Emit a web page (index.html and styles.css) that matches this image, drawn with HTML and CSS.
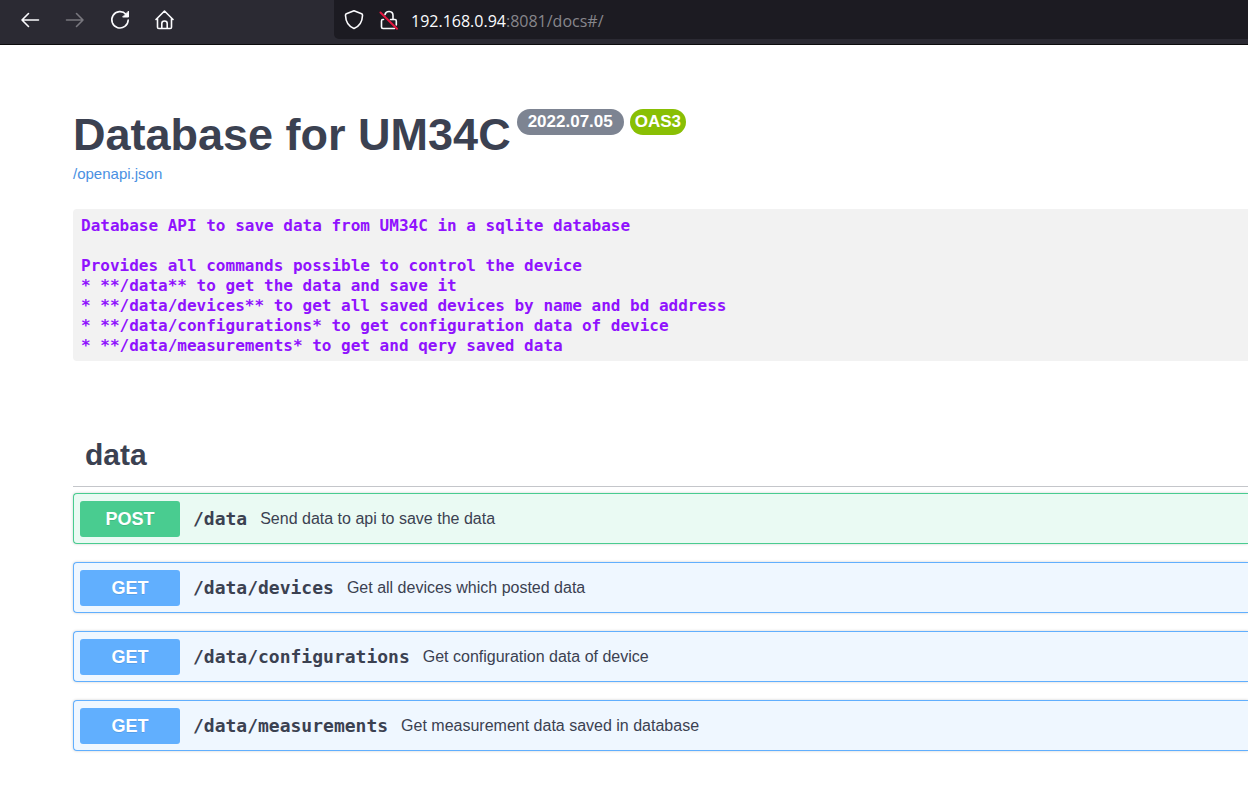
FILE: index.html
```html
<!DOCTYPE html>
<html lang="en">
<head>
<meta charset="utf-8">
<meta name="viewport" content="width=device-width, initial-scale=1">
<title>Database for UM34C</title>
<link rel="stylesheet" href="styles.css">
</head>
<body>
<header class="toolbar">
  <nav class="nav-buttons" aria-label="Browser navigation">
    <button class="icon-button" type="button" aria-label="Back">
      <svg width="20" height="20" viewBox="0 0 20 20"><path d="M18.5 10H2M8.500 3.500 2 10 8.500 16.500"/></svg>
    </button>
    <button class="icon-button disabled" type="button" aria-label="Forward" disabled>
      <svg width="20" height="20" viewBox="0 0 20 20"><path d="M1.5 10H18M11.500 3.500 18 10 11.500 16.500"/></svg>
    </button>
    <button class="icon-button" type="button" aria-label="Reload">
      <svg width="20" height="20" viewBox="0 0 20 20"><path d="M16 4.200A8.200 8.200 0 1 0 18.200 10"/><path class="solid" d="M18.500 1.500V7H13Z"/></svg>
    </button>
    <button class="icon-button" type="button" aria-label="Home">
      <svg width="20" height="20" viewBox="0 0 20 20"><path d="M1 9.500 9.500 1 18 9.500M2.500 8.500V17.200Q2.500 18.500 3.800 18.500H15.200Q16.500 18.500 16.500 17.200V8.500M6.800 18V13.500Q6.800 11 9.500 11T12.200 13.500V18"/></svg>
    </button>
  </nav>
  <div class="address-bar">
    <button class="icon-button" type="button" aria-label="Tracking protection">
      <svg width="20" height="20" viewBox="0 0 20 20"><path d="M10 .8 17.600 3.800Q18.600 4.200 18.500 5.500C18.300 11.500 15 16.500 10 18.500C5 16.500 1.700 11.500 1.500 5.500Q1.400 4.200 2.400 3.800Z"/></svg>
    </button>
    <button class="icon-button" type="button" aria-label="Connection is not secure">
      <svg width="20" height="20" viewBox="0 0 20 20"><path d="M6 4.500C7 .3 14 .3 14 5.500V9M4.500 9.500H3.800Q2.500 9.500 2.500 11V17Q2.500 18.500 4 18.500H15.500M11.500 9.500H16Q17.300 9.500 17.300 11V15"/><path class="strike" d="M1.500 2.500 18 18.800"/></svg>
    </button>
    <div class="url" role="textbox" aria-label="Address" tabindex="0"><span class="host">192.168.0.94</span>:8081/docs#/</div>
  </div>
</header>
<main class="docs">
  <section class="info">
    <div class="title-row">
      <h1 class="title">Database for UM34C</h1>
      <span class="badge version">2022.07.05</span>
      <span class="badge oas">OAS3</span>
    </div>
    <a class="spec-link" href="/openapi.json">/openapi.json</a>
    <pre class="description">Database API to save data from UM34C in a sqlite database

Provides all commands possible to control the device
* **/data** to get the data and save it
* **/data/devices** to get all saved devices by name and bd address
* **/data/configurations* to get configuration data of device
* **/data/measurements* to get and qery saved data</pre>
  </section>
  <section class="tag">
    <h2 class="tag-name">data</h2>
    <div class="operations">
      <button class="operation post" type="button"><span class="method">POST</span><span class="path">/data</span><span class="summary">Send data to api to save the data</span></button>
      <button class="operation get" type="button"><span class="method">GET</span><span class="path">/data/devices</span><span class="summary">Get all devices which posted data</span></button>
      <button class="operation get" type="button"><span class="method">GET</span><span class="path">/data/configurations</span><span class="summary">Get configuration data of device</span></button>
      <button class="operation get" type="button"><span class="method">GET</span><span class="path">/data/measurements</span><span class="summary">Get measurement data saved in database</span></button>
    </div>
  </section>
</main>
</body>
</html>
```

FILE: styles.css
```css
* {
  box-sizing: border-box;
}

body {
  margin: 0;
  background: #fff;
  color: #3b4151;
  font-family: "Liberation Sans", Arial, sans-serif;
}

.toolbar {
  display: flex;
  align-items: flex-start;
  height: 45px;
  background: #2b2a33;
  border-bottom: 1px solid #0c0c0d;
}

.nav-buttons {
  display: flex;
  flex: 0 0 334px;
  gap: 25px;
  padding: 10px 20px;
}

.icon-button {
  display: block;
  padding: 0;
  border: 0;
  background: none;
  color: #fbfbfe;
}

.icon-button.disabled {
  color: #78777e;
}

.icon-button svg {
  display: block;
  fill: none;
  stroke: currentColor;
  stroke-width: 1.6;
  stroke-linecap: round;
  stroke-linejoin: round;
}

.icon-button .solid {
  fill: currentColor;
  stroke-width: 1;
}

.icon-button .strike {
  stroke: #e4163f;
  stroke-width: 2;
}

.address-bar {
  display: flex;
  flex: 1;
  align-items: center;
  gap: 15px;
  height: 39px;
  padding-left: 10px;
  background: #1c1b22;
  border-bottom-left-radius: 5px;
}

.url {
  margin-left: -3px;
  padding-top: 3px;
  color: #87868c;
  font: 16px/24px "Open Sans", "Noto Sans", sans-serif;
  white-space: nowrap;
}

.host {
  color: #fbfbfe;
}

.docs {
  padding: 64px 0 36px 73px;
}

.title-row {
  display: flex;
  align-items: flex-start;
  gap: 6px;
}

.title {
  margin: 0;
  font-size: 45px;
  line-height: 52px;
}

.badge {
  border-radius: 13px;
  color: #fff;
  font-size: 17px;
  font-weight: 700;
  line-height: 26px;
}

.version {
  padding: 0 11px;
  background: #7d8492;
}

.oas {
  padding: 0 5px;
  background: #89bf04;
}

.spec-link {
  display: block;
  width: fit-content;
  margin-top: 4px;
  color: #4990e2;
  font-size: 15px;
  line-height: 18px;
  text-decoration: none;
}

.description {
  margin: 26px 0 0;
  padding: 7px 8px 5px;
  border-radius: 4px 0 0 4px;
  background: #f2f2f2;
  color: #9012fe;
  font: bold 16px/20px "DejaVu Sans Mono", monospace;
}

.tag {
  margin-top: 72px;
}

.tag-name {
  margin: 0 0 6px;
  padding: 4px 12px 13px;
  border-bottom: 1px solid #c4c6ca;
  font-size: 30px;
  line-height: 36px;
}

.operations {
  display: grid;
  gap: 18px;
}

.operation {
  display: flex;
  align-items: center;
  gap: 13px;
  width: 100%;
  padding: 7px 6px 6px;
  border: 1px solid;
  border-right: 0;
  border-radius: 4px 0 0 4px;
  box-shadow: 0 0 3px rgba(0, 0, 0, 0.19);
  color: #3b4151;
  font: 16px/36px "Liberation Sans", Arial, sans-serif;
  text-align: left;
}

.operation.post {
  border-color: #49cc90;
  background: #eafaf3;
}

.operation.get {
  border-color: #61affe;
  background: #eff7ff;
}

.method {
  width: 100px;
  border-radius: 3px;
  color: #fff;
  font-size: 18px;
  font-weight: 700;
  text-align: center;
  text-shadow: 0 1px 0 rgba(0, 0, 0, 0.1);
}

.post .method {
  background: #49cc90;
}

.get .method {
  background: #61affe;
}

.path {
  font-family: "DejaVu Sans Mono", monospace;
  font-size: 18px;
  font-weight: 700;
}
```
